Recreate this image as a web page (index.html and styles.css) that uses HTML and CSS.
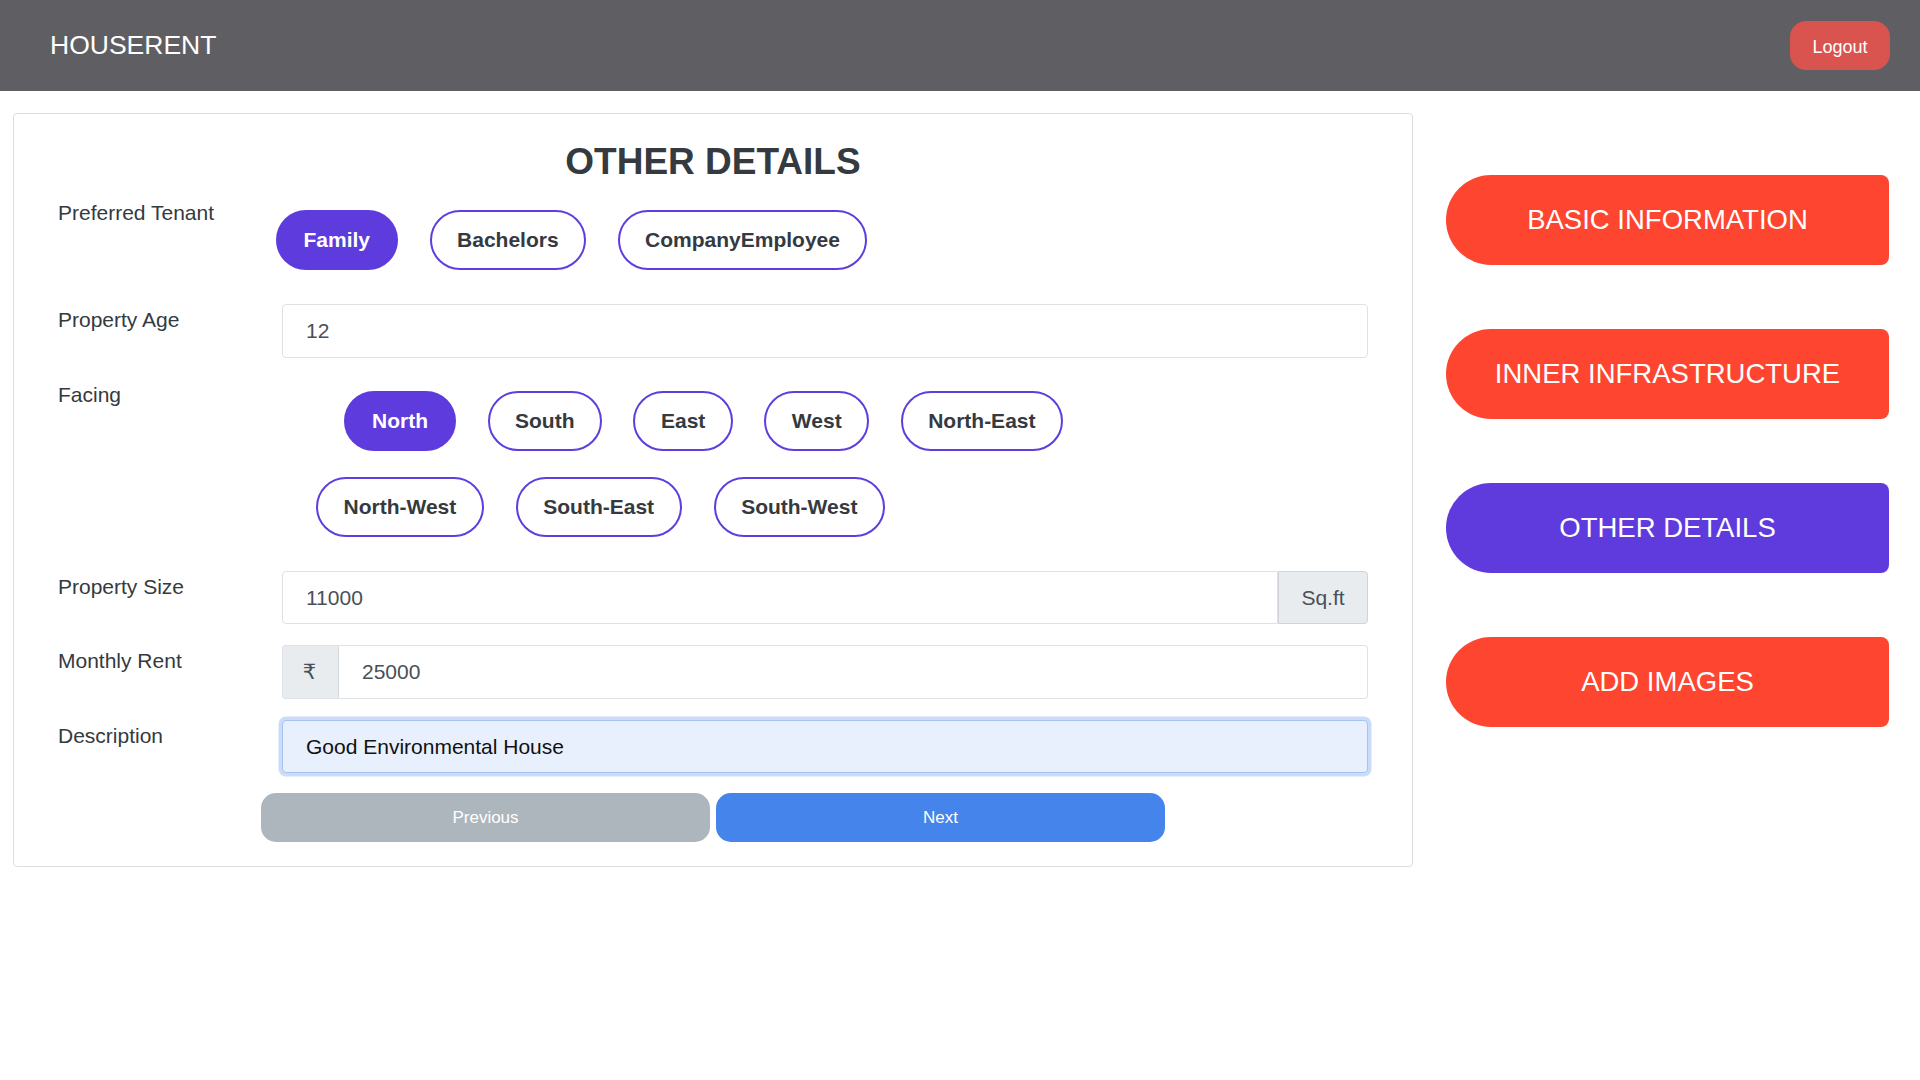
FILE: index.html
```html
<!DOCTYPE html>
<html lang="en">
<head>
<meta charset="utf-8">
<title>HOUSERENT - Other Details</title>
<link rel="stylesheet" href="styles.css">
</head>
<body>
<header class="navbar">
  <div class="brand">HOUSERENT</div>
  <button class="logout">Logout</button>
</header>
<main class="main">
  <section class="card">
    <h1 class="title">OTHER DETAILS</h1>

    <div class="row">
      <div class="label">Preferred Tenant</div>
      <div class="field">
        <div class="pills pills-tenant">
          <span class="pill active">Family</span>
          <span class="pill">Bachelors</span>
          <span class="pill">CompanyEmployee</span>
        </div>
      </div>
    </div>

    <div class="row">
      <div class="label">Property Age</div>
      <div class="field">
        <input class="input" type="text" value="12">
      </div>
    </div>

    <div class="row">
      <div class="label">Facing</div>
      <div class="field">
        <div class="pills pills-facing1">
          <span class="pill active">North</span>
          <span class="pill">South</span>
          <span class="pill">East</span>
          <span class="pill">West</span>
          <span class="pill">North-East</span>
        </div>
        <div class="pills pills-facing2">
          <span class="pill">North-West</span>
          <span class="pill">South-East</span>
          <span class="pill">South-West</span>
        </div>
      </div>
    </div>

    <div class="row">
      <div class="label">Property Size</div>
      <div class="field">
        <div class="input-group">
          <input class="input input-left" type="text" value="11000">
          <span class="addon addon-right">Sq.ft</span>
        </div>
      </div>
    </div>

    <div class="row row-rent">
      <div class="label">Monthly Rent</div>
      <div class="field">
        <div class="input-group">
          <span class="addon addon-left">₹</span>
          <input class="input input-right" type="text" value="25000">
        </div>
      </div>
    </div>

    <div class="row row-desc">
      <div class="label">Description</div>
      <div class="field">
        <input class="input input-autofill" type="text" value="Good Environmental House">
      </div>
    </div>

    <div class="actions">
      <button class="btn btn-prev">Previous</button>
      <button class="btn btn-next">Next</button>
    </div>
  </section>

  <nav class="sidebar">
    <button class="side-btn side-red">BASIC INFORMATION</button>
    <button class="side-btn side-red">INNER INFRASTRUCTURE</button>
    <button class="side-btn side-purple">OTHER DETAILS</button>
    <button class="side-btn side-red">ADD IMAGES</button>
  </nav>
</main>
</body>
</html>
```

FILE: styles.css
```css
* {
  box-sizing: border-box;
}

body {
  margin: 0;
  font-family: "Liberation Sans", Arial, "Noto Sans", sans-serif;
  background: #ffffff;
  color: #343a40;
}

.navbar {
  height: 91px;
  background: #5f5e63;
  display: flex;
  align-items: center;
  justify-content: space-between;
  padding: 0 30px 0 50px;
}

.brand {
  color: #ffffff;
  font-size: 26.5px;
  line-height: 1;
  padding-top: 0;
}

.logout {
  width: 100px;
  height: 49px;
  border: none;
  border-radius: 16px;
  background: #d9534f;
  color: #ffffff;
  font-family: "Liberation Sans", Arial, sans-serif;
  font-size: 18px;
  padding: 3px 0 0 0;
}

.main {
  display: flex;
  align-items: flex-start;
  padding-top: 22px;
}

.card {
  margin-left: 13px;
  width: 1400px;
  border: 1px solid #dedede;
  border-radius: 4px;
  padding: 26px 44px 24px 44px;
}

.title {
  margin: 0 0 13px 0;
  text-align: center;
  font-size: 37px;
  line-height: 1.2;
  font-weight: 700;
  color: #343a40;
}

.row {
  display: flex;
  margin-bottom: 21px;
}

.row-rent {
  margin-top: 0.5px;
}

.row-desc {
  margin-bottom: 20px;
}

.label {
  width: 224px;
  flex: none;
  font-size: 21px;
  line-height: 1.5;
  color: #343a40;
}

.field {
  flex: 1;
  min-width: 0;
}

.pills {
  display: flex;
  gap: 31.5px;
}

.pills-tenant {
  margin: 13px 0 13px -6.5px;
}

.pills-facing1 {
  margin: 12px 0 0 62px;
  gap: 31.5px;
}

.pills-facing2 {
  margin: 26px 0 13px 34px;
  gap: 32px;
}

.pill {
  height: 60px;
  display: inline-flex;
  align-items: center;
  padding: 0 25.5px;
  border: 2px solid #5f3dde;
  border-radius: 30px;
  font-size: 21px;
  font-weight: 700;
  color: #343a40;
  background: #ffffff;
  white-space: nowrap;
}

.pill.active {
  background: #5e3bdd;
  border-color: #5e3bdd;
  color: #ffffff;
  padding: 0 26px;
}

.input {
  display: block;
  width: 100%;
  height: 53.5px;
  border: 1px solid #dee2e6;
  border-radius: 4px;
  padding: 0 23px;
  font-family: "Liberation Sans", Arial, sans-serif;
  font-size: 21px;
  color: #495057;
  background: #ffffff;
  outline: none;
}

.input-group {
  display: flex;
}

.input-group .input {
  flex: 1;
  min-width: 0;
}

.input-left {
  border-top-right-radius: 0;
  border-bottom-right-radius: 0;
}

.input-right {
  border-top-left-radius: 0;
  border-bottom-left-radius: 0;
  border-left: none;
}

.addon {
  flex: none;
  height: 53.5px;
  display: flex;
  align-items: center;
  justify-content: center;
  background: #e9ecef;
  border: 1px solid #ced4da;
  font-size: 21px;
  color: #495057;
  font-family: "Liberation Sans", "Noto Sans", "DejaVu Sans", sans-serif;
}

.addon-right {
  width: 90px;
  border-left: 1px solid #ced4da;
  border-radius: 0 4px 4px 0;
}

.addon-left {
  width: 57px;
  border-color: #dee2e6;
  border-right: 1px solid #d4d8dc;
  border-radius: 4px 0 0 4px;
  font-family: "DejaVu Sans", "Noto Sans", sans-serif;
  font-size: 21px;
  padding-right: 2px;
}

.input-autofill {
  background: #e8f0fe;
  border-color: #a7c2f0;
  color: #111111;
  box-shadow: 0 0 0 3.5px #cadcf9;
}

.actions {
  display: flex;
  gap: 6px;
  padding-left: 203px;
}

.btn {
  width: 449px;
  height: 49px;
  border: none;
  border-radius: 15px;
  color: #ffffff;
  font-family: "Liberation Sans", Arial, sans-serif;
  font-size: 17px;
  padding: 1px 0 0 0;
}

.btn-prev {
  background: #adb5bd;
}

.btn-next {
  background: #4584ea;
}

.sidebar {
  margin-left: 33px;
  width: 443px;
  padding-top: 62px;
  display: flex;
  flex-direction: column;
  gap: 64px;
}

.side-btn {
  width: 443px;
  height: 90px;
  border: none;
  border-radius: 45px 8px 8px 45px;
  color: #ffffff;
  font-family: "Liberation Sans", Arial, sans-serif;
  font-size: 27.5px;
  padding: 0;
}

.side-red {
  background: #fd4530;
}

.side-purple {
  background: #5f3bde;
}
```
